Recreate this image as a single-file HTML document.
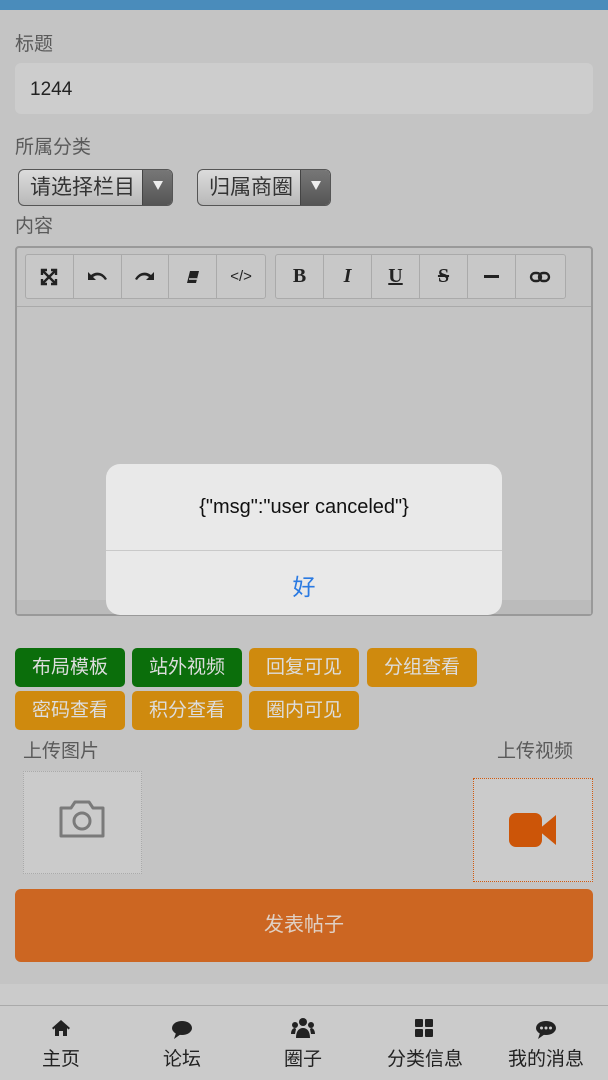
<!DOCTYPE html><html><head><meta charset="utf-8"><style>
*{margin:0;padding:0;box-sizing:border-box}
body{width:608px;height:1080px;background:#c4c4c4;font-family:"Liberation Sans","Noto Sans CJK SC",sans-serif;position:relative;overflow:hidden;color:#555}
.a{position:absolute}
.lbl{font-size:19px;color:#5a5a5a}
.sel{position:absolute;top:169px;height:37px;border:1px solid #555;border-radius:6px;background:linear-gradient(#dcdcdc,#b8b8b8);font-size:21px;color:#333;padding-left:11px;line-height:35px;overflow:hidden}
.sel i{position:absolute;right:0;top:0;width:30px;height:100%;background:linear-gradient(#777,#555);border-left:1px solid #444}
.sel i:after{content:"";position:absolute;left:10px;top:11px;border:5px solid transparent;border-top:9px solid #eee}
.tb{position:absolute;top:254px;height:45px;border:1px solid #aaa;border-radius:3px;display:flex;background:#c8c8c8}
.tb div{width:48px;border-right:1px solid #aaa;display:flex;align-items:center;justify-content:center;font:bold 20px "Liberation Serif",serif;color:#222}
.tb div:last-child{border-right:none}
.b{position:absolute;height:39px;width:110px;border-radius:5px;color:#ddd;font-size:19px;text-align:center;line-height:39px}
.g{background:#0b6e0b}.o{background:#cf8a0e}
.tab{position:absolute;top:1016px;width:122px;text-align:center;font-size:19px;color:#222}
</style></head><body>
<div class="a" style="left:0;top:0;width:608px;height:10px;background:#4a8cbb"></div>
<div class="a lbl" style="left:15px;top:29px">标题</div>
<div class="a" style="left:15px;top:63px;width:578px;height:51px;background:#cdcdcd;border-radius:6px;font-size:19px;color:#222;padding-left:15px;line-height:53px">1244</div>
<div class="a lbl" style="left:15px;top:132px">所属分类</div>
<div class="sel" style="left:18px;width:155px">请选择栏目<i></i></div>
<div class="sel" style="left:197px;width:134px">归属商圈<i></i></div>
<div class="a lbl" style="left:15px;top:211px">内容</div>
<div class="a" style="left:15px;top:246px;width:578px;height:370px;border:2px solid #999;border-radius:4px;background:#c4c4c4"></div>
<div class="a" style="left:17px;top:306px;width:574px;height:1px;background:#aaa"></div>
<div class="tb" style="left:25px;width:241px">
<div><svg width="18" height="18" viewBox="0 0 18 18" stroke="#222" stroke-width="2.4" fill="none"><path d="M3 3l12 12M15 3L3 15M2 7V2h5M11 2h5v5M2 11v5h5M16 11v5h-5"/></svg></div>
<div><svg width="22" height="14" viewBox="0 0 22 14"><path d="M2 2v8h8L7 7c4-3 9-2 12 3l2-1C17 2 10 1 5 5z" fill="#222"/></svg></div>
<div><svg width="22" height="14" viewBox="0 0 22 14"><path d="M20 2v8h-8l3-3c-4-3-9-2-12 3L1 9C5 2 12 1 17 5z" fill="#222"/></svg></div>
<div><svg width="14" height="14" viewBox="0 0 14 14"><path d="M4 1h9l-3 12H1z" fill="#222"/><path d="M3 9h8" stroke="#ccc" stroke-width="1.5"/></svg></div>
<div style="font:15px 'Liberation Sans',sans-serif">&lt;/&gt;</div>
</div>
<div class="tb" style="left:275px;width:291px">
<div>B</div><div style="font-style:italic">I</div><div style="text-decoration:underline">U</div><div style="text-decoration:line-through">S</div>
<div><div style="width:15px;height:3px;background:#222;border:none"></div></div>
<div><svg width="22" height="12" viewBox="0 0 22 12" fill="none" stroke="#222" stroke-width="2.4"><rect x="2" y="2" width="10" height="8" rx="4"/><rect x="10" y="2" width="10" height="8" rx="4"/></svg></div>
</div>
<div class="a" style="left:17px;top:600px;width:574px;height:14px;background:#bbb"></div>
<div class="a" style="left:106px;top:464px;width:396px;height:151px;background:#e9e9e9;border-radius:14px"></div>
<div class="a" style="left:106px;top:496px;width:396px;text-align:center;font-size:20px;color:#111">{"msg":"user canceled"}</div>
<div class="a" style="left:106px;top:550px;width:396px;height:1px;background:#c9c9c9"></div>
<div class="a" style="left:106px;top:568px;width:396px;text-align:center;font-size:23px;color:#2a7ae2">好</div>
<div class="b g" style="left:15px;top:648px">布局模板</div>
<div class="b g" style="left:132px;top:648px">站外视频</div>
<div class="b o" style="left:249px;top:648px">回复可见</div>
<div class="b o" style="left:367px;top:648px">分组查看</div>
<div class="b o" style="left:15px;top:691px">密码查看</div>
<div class="b o" style="left:132px;top:691px">积分查看</div>
<div class="b o" style="left:249px;top:691px">圈内可见</div>
<div class="a lbl" style="left:23px;top:736px">上传图片</div>
<div class="a lbl" style="left:497px;top:736px">上传视频</div>
<div class="a" style="left:23px;top:771px;width:119px;height:103px;border:1px dotted #aaa;background:#cbcbcb"></div>
<svg class="a" style="left:58px;top:798px" width="48" height="42" viewBox="0 0 48 42" fill="none" stroke="#7a7a7a" stroke-width="3"><path d="M3 10h10l4-6h14l4 6h10v28H3z" stroke-linejoin="round"/><circle cx="24" cy="23" r="8"/></svg>
<div class="a" style="left:473px;top:778px;width:120px;height:104px;border:1px dotted #d05a10;background:#cbcbcb"></div>
<svg class="a" style="left:508px;top:810px" width="50" height="40" viewBox="0 0 50 40"><rect x="1" y="3" width="33" height="34" rx="7" fill="#cc5508"/><path d="M30 20L48 5v30z" fill="#cc5508"/></svg>
<div class="a" style="left:15px;top:889px;width:578px;height:73px;background:#cc6622;border-radius:6px;text-align:center;line-height:73px;font-size:20px;color:#e0d0c4">发表帖子</div>
<div class="a" style="left:0;top:984px;width:608px;height:96px;background:#cbcbcb"></div>
<div class="a" style="left:0;top:1005px;width:608px;height:1px;background:#aaa"></div>
<svg class="a" style="left:51px;top:1019px" width="20" height="18" viewBox="0 0 20 18"><path d="M10 1L1 9l1.5 1.5L4 9v8h4v-5h4v5h4V9l1.5 1.5L19 9z" fill="#222"/></svg>
<svg class="a" style="left:171px;top:1020px" width="22" height="20" viewBox="0 0 22 20"><ellipse cx="11" cy="8" rx="10" ry="7" fill="#222"/><path d="M5 13l-2 6 7-5z" fill="#222"/></svg>
<svg class="a" style="left:291px;top:1017px" width="24" height="22" viewBox="0 0 24 22" fill="#222"><circle cx="12" cy="5" r="4"/><circle cx="4" cy="8" r="3"/><circle cx="20" cy="8" r="3"/><path d="M5 21c0-7 3-10 7-10s7 3 7 10zM0 17c0-4 2-6 4-6l1 1-1 5zM24 17c0-4-2-6-4-6l-1 1 1 5z"/></svg>
<svg class="a" style="left:414px;top:1018px" width="21" height="20" viewBox="0 0 21 20" fill="#222"><rect x="1" y="1" width="8" height="8" rx="1"/><rect x="11" y="1" width="8" height="8" rx="1"/><rect x="1" y="11" width="8" height="8" rx="1"/><rect x="11" y="11" width="8" height="8" rx="1"/></svg>
<svg class="a" style="left:535px;top:1020px" width="22" height="20" viewBox="0 0 22 20"><ellipse cx="11" cy="8" rx="10" ry="7" fill="#222"/><path d="M5 13l-2 6 7-5z" fill="#222"/><circle cx="6.5" cy="8" r="1.5" fill="#ccc"/><circle cx="11" cy="8" r="1.5" fill="#ccc"/><circle cx="15.5" cy="8" r="1.5" fill="#ccc"/></svg>
<div class="tab" style="left:0;top:1044px">主页</div>
<div class="tab" style="left:121px;top:1044px">论坛</div>
<div class="tab" style="left:242px;top:1044px">圈子</div>
<div class="tab" style="left:364px;top:1044px">分类信息</div>
<div class="tab" style="left:485px;top:1044px">我的消息</div>
</body></html>
